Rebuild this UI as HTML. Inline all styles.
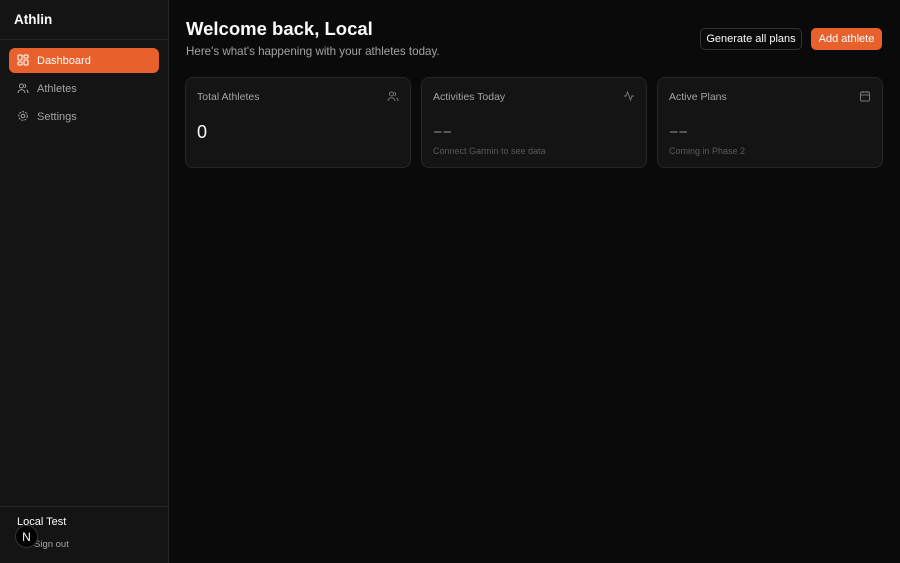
<!DOCTYPE html><html><head><style>
*{box-sizing:border-box;margin:0;padding:0}
body{width:900px;height:563px;background:#0a0a0a;font-family:"Liberation Sans",sans-serif;color:#fafafa;position:relative;overflow:hidden}
.side{position:absolute;left:0;top:0;width:169px;height:563px;background:#141414;border-right:1px solid #262626}
.logo{position:absolute;left:14px;top:12px;font-size:13.5px;font-weight:bold}
.hr{position:absolute;left:0;width:168px;height:1px;background:#262626}
.nav{position:absolute;left:9px;width:150px;height:25px;border-radius:6px;font-size:11px;display:flex;align-items:center;padding-left:28px;color:#a3a3a3}
.nav svg{position:absolute;left:8px;top:6px}
.nav.act{background:#e8602c;color:#fff}
.card{position:absolute;top:77px;width:226px;height:91px;border:1px solid #262626;border-radius:8px;background:#141414}
.ct{position:absolute;left:11px;top:13px;font-size:10.5px;color:#a3a3a3}
.ci{position:absolute;right:11px;top:12px}
.cv{position:absolute;left:11px;top:44px;font-size:18px}
.dash{position:absolute;left:12px;top:53px;width:17px;height:2px;background:linear-gradient(90deg,#555 45%,transparent 45%,transparent 55%,#555 55%)}
.cs{position:absolute;left:11px;top:68px;font-size:9px;color:#5a5a5a}
.btn{position:absolute;top:28px;height:22px;border-radius:5px;font-size:11px;display:flex;align-items:center;justify-content:center}
</style></head><body>
<div class="side">
<div class="logo">Athlin</div>
<div class="hr" style="top:39px"></div>
<div class="nav act" style="top:48px"><svg width="12" height="12" viewBox="0 0 12 12" fill="none" stroke="#fff" stroke-width="1.1"><rect x="1" y="1" width="4" height="5" rx=".6"/><rect x="7" y="1" width="4" height="3" rx=".6"/><rect x="7" y="6" width="4" height="5" rx=".6"/><rect x="1" y="8" width="4" height="3" rx=".6"/></svg>Dashboard</div>
<div class="nav" style="top:76px"><svg width="12" height="12" viewBox="0 0 12 12" fill="none" stroke="#a3a3a3" stroke-width="1"><circle cx="4.5" cy="4" r="2"/><path d="M1 11c0-2 1.5-3.3 3.5-3.3S8 9 8 11M7.5 2.2a2 2 0 010 3.6M9.5 7.8c1 .5 1.5 1.6 1.5 3.2"/></svg>Athletes</div>
<div class="nav" style="top:104px"><svg width="12" height="12" viewBox="0 0 12 12" fill="none" stroke="#a3a3a3" stroke-width="1"><circle cx="6" cy="6" r="1.8"/><circle cx="6" cy="6" r="4.3" stroke-dasharray="2 1.2"/></svg>Settings</div>
<div class="hr" style="top:506px"></div>
<div style="position:absolute;left:17px;top:516px;font-size:11px">Local Test</div>
<div style="position:absolute;left:34px;top:539px;font-size:9.5px;color:#a3a3a3">Sign out</div>
<div style="position:absolute;left:15px;top:525px;width:23px;height:23px;border-radius:50%;background:#000;border:1px solid #333;font-size:12px;display:flex;align-items:center;justify-content:center">N</div>
</div>
<div style="position:absolute;left:186px;top:18px;font-size:18.5px;font-weight:bold">Welcome back, Local</div>
<div style="position:absolute;left:186px;top:45px;font-size:11.6px;color:#a3a3a3">Here's what's happening with your athletes today.</div>
<div class="btn" style="left:700px;width:102px;border:1px solid #333;background:#0a0a0a">Generate all plans</div>
<div class="btn" style="left:811px;width:71px;background:#e8602c;color:#fff">Add athlete</div>
<div class="card" style="left:185px"><div class="ct">Total Athletes</div><svg class="ci" width="12" height="12" viewBox="0 0 12 12" fill="none" stroke="#777" stroke-width="1"><circle cx="4.5" cy="4" r="2"/><path d="M1 11c0-2 1.5-3.3 3.5-3.3S8 9 8 11M7.5 2.2a2 2 0 010 3.6M9.5 7.8c1 .5 1.5 1.6 1.5 3.2"/></svg><div class="cv">0</div></div>
<div class="card" style="left:421px"><div class="ct">Activities Today</div><svg class="ci" width="12" height="12" viewBox="0 0 12 12" fill="none" stroke="#777" stroke-width="1"><path d="M1 6h2l1.5-4 3 8L9 6h2"/></svg><div class="dash"></div><div class="cs">Connect Garmin to see data</div></div>
<div class="card" style="left:657px"><div class="ct">Active Plans</div><svg class="ci" width="12" height="12" viewBox="0 0 12 12" fill="none" stroke="#777" stroke-width="1"><rect x="1.5" y="2" width="9" height="9" rx="1.2"/><path d="M1.5 5h9M4 1v2M8 1v2"/></svg><div class="dash"></div><div class="cs">Coming in Phase 2</div></div>
</body></html>
